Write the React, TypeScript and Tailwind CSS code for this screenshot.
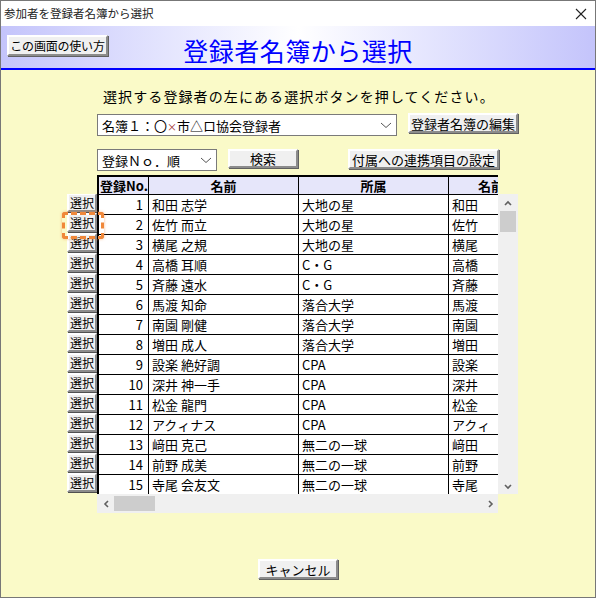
import React from "react";

const rows: [number, string, string, string][] = [
  [1, "和田 志学", "大地の星", "和田"],
  [2, "佐竹 而立", "大地の星", "佐竹"],
  [3, "横尾 之規", "大地の星", "横尾"],
  [4, "高橋 耳順", "C・G", "高橋"],
  [5, "斉藤 遠水", "C・G", "斉藤"],
  [6, "馬渡 知命", "落合大学", "馬渡"],
  [7, "南園 剛健", "落合大学", "南園"],
  [8, "増田 成人", "落合大学", "増田"],
  [9, "設楽 絶好調", "CPA", "設楽"],
  [10, "深井 神一手", "CPA", "深井"],
  [11, "松金 龍門", "CPA", "松金"],
  [12, "アクィナス", "CPA", "アクィ"],
  [13, "﨑田 克己", "無二の一球", "﨑田"],
  [14, "前野 成美", "無二の一球", "前野"],
  [15, "寺尾 会友文", "無二の一球", "寺尾"],
];

const btn =
  "flex items-center justify-center whitespace-nowrap bg-[#f0f0f0] border-2 border-t-white border-l-white border-r-[#8c8c8c] border-b-[#8c8c8c] text-black leading-none";

function Chevron({ dir }: { dir: "up" | "down" | "left" | "right" }) {
  const pts = {
    up: "2,7 5,4 8,7",
    down: "2,4 5,7 8,4",
    left: "7,2 4,5 7,8",
    right: "4,2 7,5 4,8",
  }[dir];
  return (
    <svg width="10" height="10" viewBox="0 0 10 10">
      <polyline points={pts} fill="none" stroke="#606060" strokeWidth="1.6" />
    </svg>
  );
}

function DropArrow() {
  return (
    <svg width="12" height="8" viewBox="0 0 12 8">
      <polyline points="1,2 6,6.5 11,2" fill="none" stroke="#555" strokeWidth="1" />
    </svg>
  );
}

export default function App() {
  return (
    <div className="w-[596px] h-[598px] border border-[#777] bg-[#fafac8] flex flex-col overflow-hidden font-['Noto_Sans_CJK_JP','Noto_Sans',sans-serif] text-black">
      {/* title bar */}
      <div className="h-[25px] shrink-0 bg-white flex items-center justify-between pl-[3px] pr-[8px]">
        <span className="text-[11.5px] leading-none text-[#222]">参加者を登録者名簿から選択</span>
        <svg width="12" height="12" viewBox="0 0 12 12">
          <line x1="1" y1="1" x2="11" y2="11" stroke="#222" strokeWidth="1.1" />
          <line x1="11" y1="1" x2="1" y2="11" stroke="#222" strokeWidth="1.1" />
        </svg>
      </div>

      {/* header band */}
      <div className="h-[44px] shrink-0 bg-linear-to-r from-[#c4c4fb] via-white to-[#c4c4fb] border-b-2 border-[#0000ff] grid grid-cols-[1fr_auto_1fr]">
        <div className="pl-[6px] pt-[9px]">
          <button className={`${btn} w-[101px] h-[21px] text-[12px] tracking-[-0.2px] shadow-[1px_1px_0_#606060]`}>この画面の使い方</button>
        </div>
        <div className="pt-[9px] text-[25px] leading-[30px] text-[#0000ff] tracking-[0.5px]">登録者名簿から選択</div>
        <div />
      </div>

      {/* body */}
      <div className="flex flex-col flex-1">
        <div className="mt-[16px] pl-[102px] h-[20px] text-[14px] leading-[20px] tracking-[1.1px]">
          選択する登録者の左にある選択ボタンを押してください。
        </div>

        <div className="mt-[8px] pl-[96px] flex items-start">
          <div className="w-[300px] h-[22px] bg-white border border-[#7a7a7a] flex items-center justify-between pl-[4px] pr-[4px] text-[13px] leading-none">
            <span>名簿１：〇<span className="text-[10px] text-[#a03030]">×</span>市△ロ協会登録者</span>
            <DropArrow />
          </div>
          <button className={`${btn} ml-[11px] -mt-px w-[110px] h-[20px] text-[13px] shadow-[1px_1px_0_#606060]`}>登録者名簿の編集</button>
        </div>

        <div className="mt-[13px] pl-[96px] flex items-start">
          <div className="w-[120px] h-[22px] bg-white border border-[#7a7a7a] flex items-center justify-between pl-[4px] pr-[4px] text-[13px] leading-none">
            <span>登録Ｎｏ．順</span>
            <DropArrow />
          </div>
          <button className={`${btn} ml-[11px] w-[70px] h-[19px] text-[13px] shadow-[1px_1px_0_#606060]`}>検索</button>
          <button className={`${btn} ml-[50px] w-[151px] h-[20px] text-[13px] shadow-[1px_1px_0_#606060]`}>付属への連携項目の設定</button>
        </div>

        {/* table area */}
        <div className="mt-[4px] pl-[66px] flex relative">
          {/* select buttons */}
          <div className="w-[30px] mt-[19px] h-[300px] overflow-hidden">
            <div className="-mt-[1px] flex flex-col">
              {rows.map((r) => (
                <button
                  key={r[0]}
                  className={`${btn} w-[30px] h-[19px] mb-[1px] text-[12px] shadow-[1px_1px_0_#505050]`}
                >
                  選択
                </button>
              ))}
            </div>
          </div>

          <div className="flex flex-col">
            <div className="flex">
              <div className="w-[401px] h-[319px] overflow-hidden border-l-2 border-t-2 border-black bg-white">
                <div className="grid grid-cols-[50px_150px_150px_150px] w-[500px] text-[13px]">
                  {["登録No.", "名前", "所属", "名前"].map((h, i) => (
                    <div
                      key={i}
                      className={`h-[18px] bg-[#e6e6fa] border-r border-b border-black font-bold leading-[18px] whitespace-nowrap ${
                        i === 0 ? "pl-[1px]" : i === 3 ? "pl-[29px]" : "text-center"
                      }`}
                    >
                      {h}
                    </div>
                  ))}
                  {rows.map((r) => (
                    <React.Fragment key={r[0]}>
                      <div className="h-[20px] border-r border-b border-black text-right pr-[5px] leading-[20px]">{r[0]}</div>
                      <div className="h-[20px] border-r border-b border-black pl-[3px] leading-[20px]">{r[1]}</div>
                      <div className="h-[20px] border-r border-b border-black pl-[3px] leading-[20px]">{r[2]}</div>
                      <div className="h-[20px] border-r border-b border-black pl-[3px] leading-[20px]">{r[3]}</div>
                    </React.Fragment>
                  ))}
                </div>
              </div>
              {/* vertical scrollbar */}
              <div className="mt-[19px] w-[20px] h-[300px] bg-[#f0f0f0] flex flex-col">
                <div className="h-[17px] flex items-center justify-center">
                  <Chevron dir="up" />
                </div>
                <div className="h-[21px] mx-[2px] bg-[#cdcdcd]" />
                <div className="flex-1" />
                <div className="h-[17px] flex items-center justify-center">
                  <Chevron dir="down" />
                </div>
              </div>
            </div>
            {/* horizontal scrollbar */}
            <div className="w-[401px] h-[19px] bg-[#f0f0f0] flex items-center">
              <div className="w-[17px] flex items-center justify-center">
                <Chevron dir="left" />
              </div>
              <div className="w-[41px] h-[15px] bg-[#cdcdcd]" />
              <div className="flex-1" />
              <div className="w-[17px] flex items-center justify-center">
                <Chevron dir="right" />
              </div>
            </div>
          </div>

          {/* highlight on second select button */}
          <div className="absolute left-[61px] top-[37px] w-[42px] h-[27px] rounded-[3px] border-[3px] border-dashed border-[#f0883a] shadow-[0_0_3px_rgba(240,136,58,0.6)] pointer-events-none" />
        </div>

        <div className="mt-[46px] flex justify-center">
          <button className={`${btn} w-[80px] h-[20px] text-[13px] shadow-[1px_1px_0_#606060]`}>キャンセル</button>
        </div>
      </div>
    </div>
  );
}
